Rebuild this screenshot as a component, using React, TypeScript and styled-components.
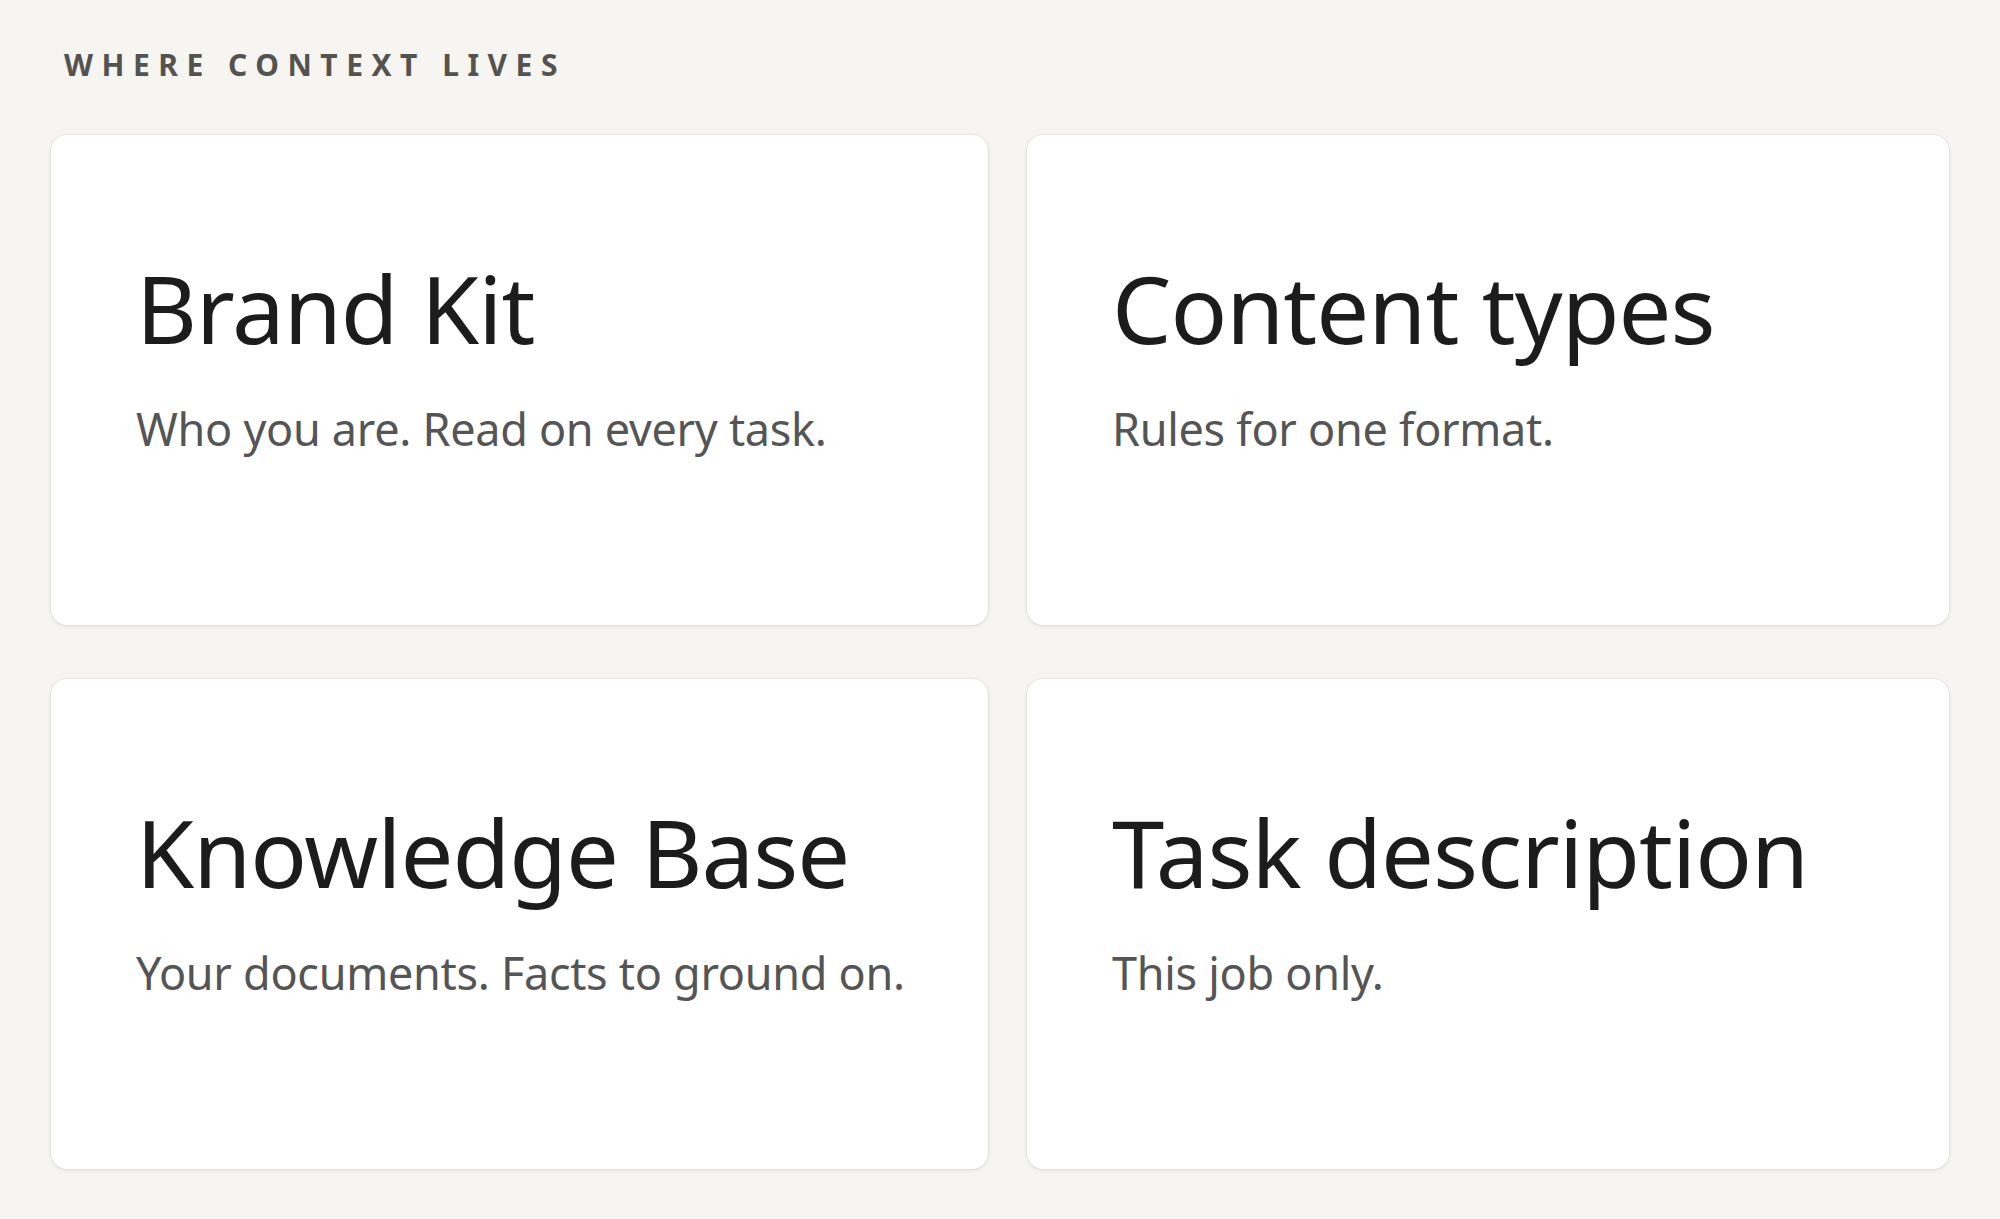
import React from 'react';
import styled, { createGlobalStyle } from 'styled-components';

const GlobalStyle = createGlobalStyle`
  html, body {
    margin: 0;
    background: #f6f5f2;
    font-family: 'Noto Sans', 'Open Sans', sans-serif;
  }
`;

const Page = styled.div`
  padding: 44px 51px 53px 51px;
  width: 2000px;
  height: 1219px;
  box-sizing: border-box;
`;

const Eyebrow = styled.div`
  font-size: 30px;
  font-weight: 700;
  letter-spacing: 8.5px;
  color: #555350;
  margin: 0 0 0 13px;
  height: 91px;
`;

const Grid = styled.div`
  display: grid;
  grid-template-columns: 937px 922px;
  grid-auto-rows: 490px;
  column-gap: 39px;
  row-gap: 54px;
`;

const Card = styled.div`
  background: #ffffff;
  border-radius: 16px;
  box-shadow: 0 1px 4px rgba(0, 0, 0, 0.1), 0 0 0 1px rgba(0, 0, 0, 0.03);
  padding: 122px 0 0 85px;
  box-sizing: border-box;
`;

const Title = styled.h2`
  margin: 0;
  font-size: 94px;
  font-weight: 400;
  color: #1c1c1c;
  line-height: 1.1;
  letter-spacing: -1px;
`;

const Subtitle = styled.p`
  margin: 38px 0 0;
  font-size: 45px;
  color: #555555;
  letter-spacing: -0.3px;
`;

const items = [
  { title: 'Brand Kit', text: 'Who you are. Read on every task.' },
  { title: 'Content types', text: 'Rules for one format.' },
  { title: 'Knowledge Base', text: 'Your documents. Facts to ground on.' },
  { title: 'Task description', text: 'This job only.' },
];

export default function App() {
  return (
    <Page>
      <GlobalStyle />
      <Eyebrow>WHERE CONTEXT LIVES</Eyebrow>
      <Grid>
        {items.map((item) => (
          <Card key={item.title}>
            <Title>{item.title}</Title>
            <Subtitle>{item.text}</Subtitle>
          </Card>
        ))}
      </Grid>
    </Page>
  );
}
